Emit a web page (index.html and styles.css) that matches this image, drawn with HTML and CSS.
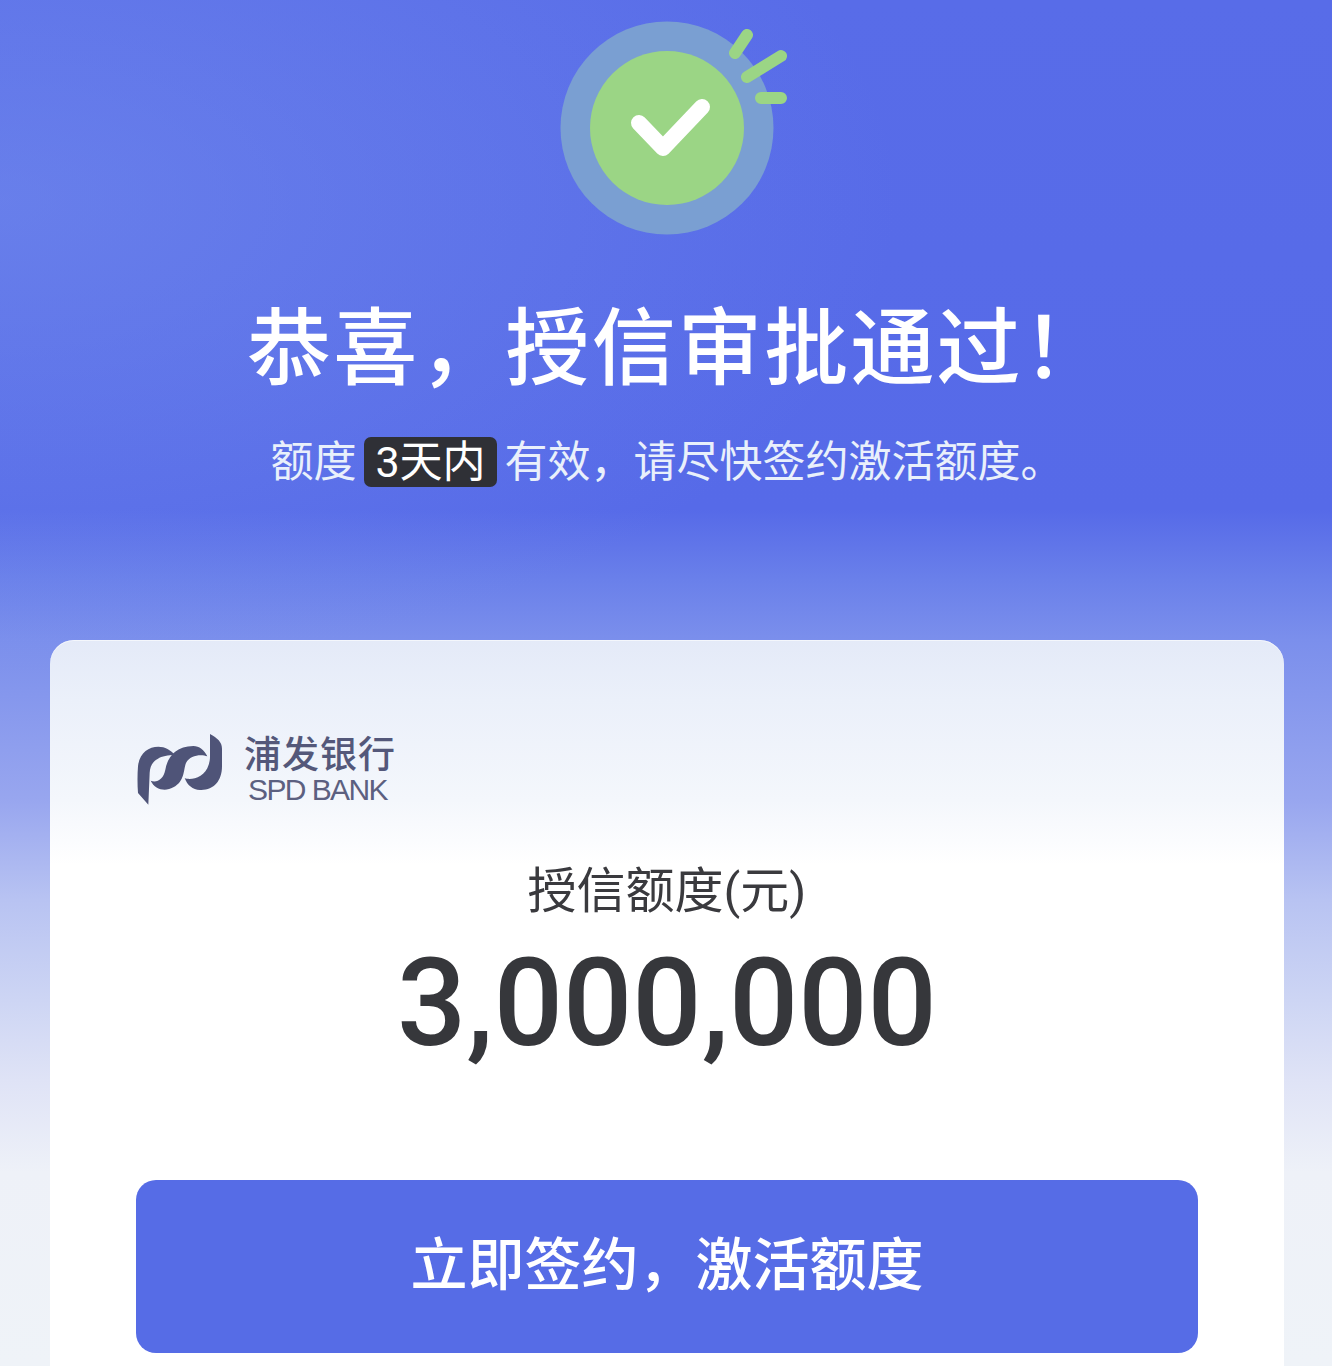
FILE: index.html
```html
<!DOCTYPE html>
<html lang="zh-CN">
<head>
<meta charset="utf-8">
<title>授信审批通过</title>
<link rel="stylesheet" href="styles.css">
</head>
<body>
<main class="page">
  <section class="hero">
    <svg class="status-icon" width="240" height="240" viewBox="-13 0 240 240" aria-hidden="true">
      <circle cx="107" cy="128" r="106.5" fill="#7a9fd2"/>
      <circle cx="107" cy="128" r="77" fill="#9bd585"/>
      <path d="M79 123 L103 148 L142 107" fill="none" stroke="#fff" stroke-width="16" stroke-linecap="round" stroke-linejoin="round"/>
      <path d="M175 53 L187 35 M187 77 L221 56 M201 98 L221 98" fill="none" stroke="#9bd585" stroke-width="12" stroke-linecap="round"/>
    </svg>
    <h1 class="title">恭喜，授信审批通过！</h1>
    <p class="subtitle">额度<span class="tag">3天内</span>有效，请尽快签约激活额度。</p>
  </section>
  <section class="card">
    <div class="brand">
      <svg class="brand-mark" width="88" height="73" viewBox="18 15 264 219" aria-hidden="true">
        <path d="M55 230 L24 195 C22 170 22 140 24 115 C28 75 55 56 85 56 C105 56 122 66 134 80 C115 82 95 84 84 92 C68 100 60 115 59 135 Z" fill="#4f5478"/>
        <path d="M62 158 C80 165 100 155 106 125 C112 90 135 54 190 54 C208 54 222 66 232 85 C215 78 180 80 168 105 C160 125 165 160 130 178 C105 192 75 185 62 158 Z" fill="#4f5478"/>
        <path d="M240 18 C262 30 276 42 276 62 V115 C276 160 250 188 210 186 C188 185 172 172 164 150 C180 158 225 150 236 110 C239 100 240 95 240 85 Z" fill="#4f5478"/>
      </svg>
      <div class="brand-text">
        <span class="brand-cn">浦发银行</span>
        <span class="brand-en">SPD BANK</span>
      </div>
    </div>
    <div class="limit">
      <p class="limit-label">授信额度(元)</p>
      <p class="limit-value">3,000,000</p>
    </div>
    <button class="cta" type="button">立即签约，激活额度</button>
  </section>
</main>
</body>
</html>
```
FILE: styles.css
```css
* { box-sizing: border-box; }
html, body { margin: 0; padding: 0; }
body {
  width: 1332px;
  height: 1366px;
  overflow: hidden;
  font-family: "Roboto", "Noto Sans CJK SC", sans-serif;
}
.page {
  height: 1366px;
  padding: 0 48px 0 50px;
  background:
    radial-gradient(900px 480px at 0 200px, rgba(127, 154, 238, .42), rgba(127, 154, 238, 0) 100%),
    linear-gradient(180deg, #586ce8 0, #566ae8 510px, #6a80ea 580px, #7b8fec 640px, #98a6ef 800px, #b8c3f2 900px, #cdd5f4 1000px, #dfe3f6 1080px, #eef1f8 1172px, #eff3f8 100%);
}
.hero {
  display: flex;
  flex-direction: column;
  align-items: center;
  height: 640px;
}
.status-icon { display: block; flex: none; }
.title {
  margin: 50px 0 0;
  padding-left: 22px;
  font-size: 84px;
  line-height: 120px;
  font-weight: 500;
  letter-spacing: 2.2px;
  color: #fff;
  white-space: nowrap;
}
.subtitle {
  margin: 27px 0 0;
  font-size: 43px;
  line-height: 50px;
  color: #e9f0fb;
  white-space: nowrap;
}
.tag {
  display: inline-block;
  margin: 0 8px;
  padding: 0 11px;
  border-radius: 7px;
  background: #2f3036;
  color: #fff;
}
.card {
  height: 760px;
  padding: 93px 86px 0;
  border-radius: 24px 24px 0 0;
  background: linear-gradient(180deg, #e4eaf8 0, #ebf0fa 60px, #f4f7fc 160px, #fff 225px);
  box-shadow: inset 0 1px 0 rgba(255, 255, 255, .6);
}
.brand { display: flex; align-items: flex-start; gap: 20px; height: 76px; }
.brand-mark { flex: none; }
.brand-text { display: flex; flex-direction: column; align-items: center; padding-top: 4px; }
.brand-cn { font-size: 37px; line-height: 38px; color: #54587a; font-weight: 500; letter-spacing: 1px; }
.brand-en { font-family: "Liberation Sans", sans-serif; font-size: 30px; line-height: 30px; color: #5c6080; letter-spacing: -1.6px; margin-right: 5px; }
.limit { text-align: center; margin-top: 53px; }
.limit-label { margin: 0; font-size: 49px; line-height: 60px; color: #3a3a3e; }
.limit-value {
  margin: 12px 0 0;
  font-size: 122px;
  line-height: 140px;
  font-weight: 500;
  color: #36373b;
}
.cta {
  display: block;
  width: 100%;
  height: 173px;
  margin-top: 106px;
  padding: 0 0 14px;
  border: 0;
  border-radius: 20px;
  background: #566ce6;
  color: #fff;
  font-family: inherit;
  font-size: 57px;
  font-weight: 500;
}
```
